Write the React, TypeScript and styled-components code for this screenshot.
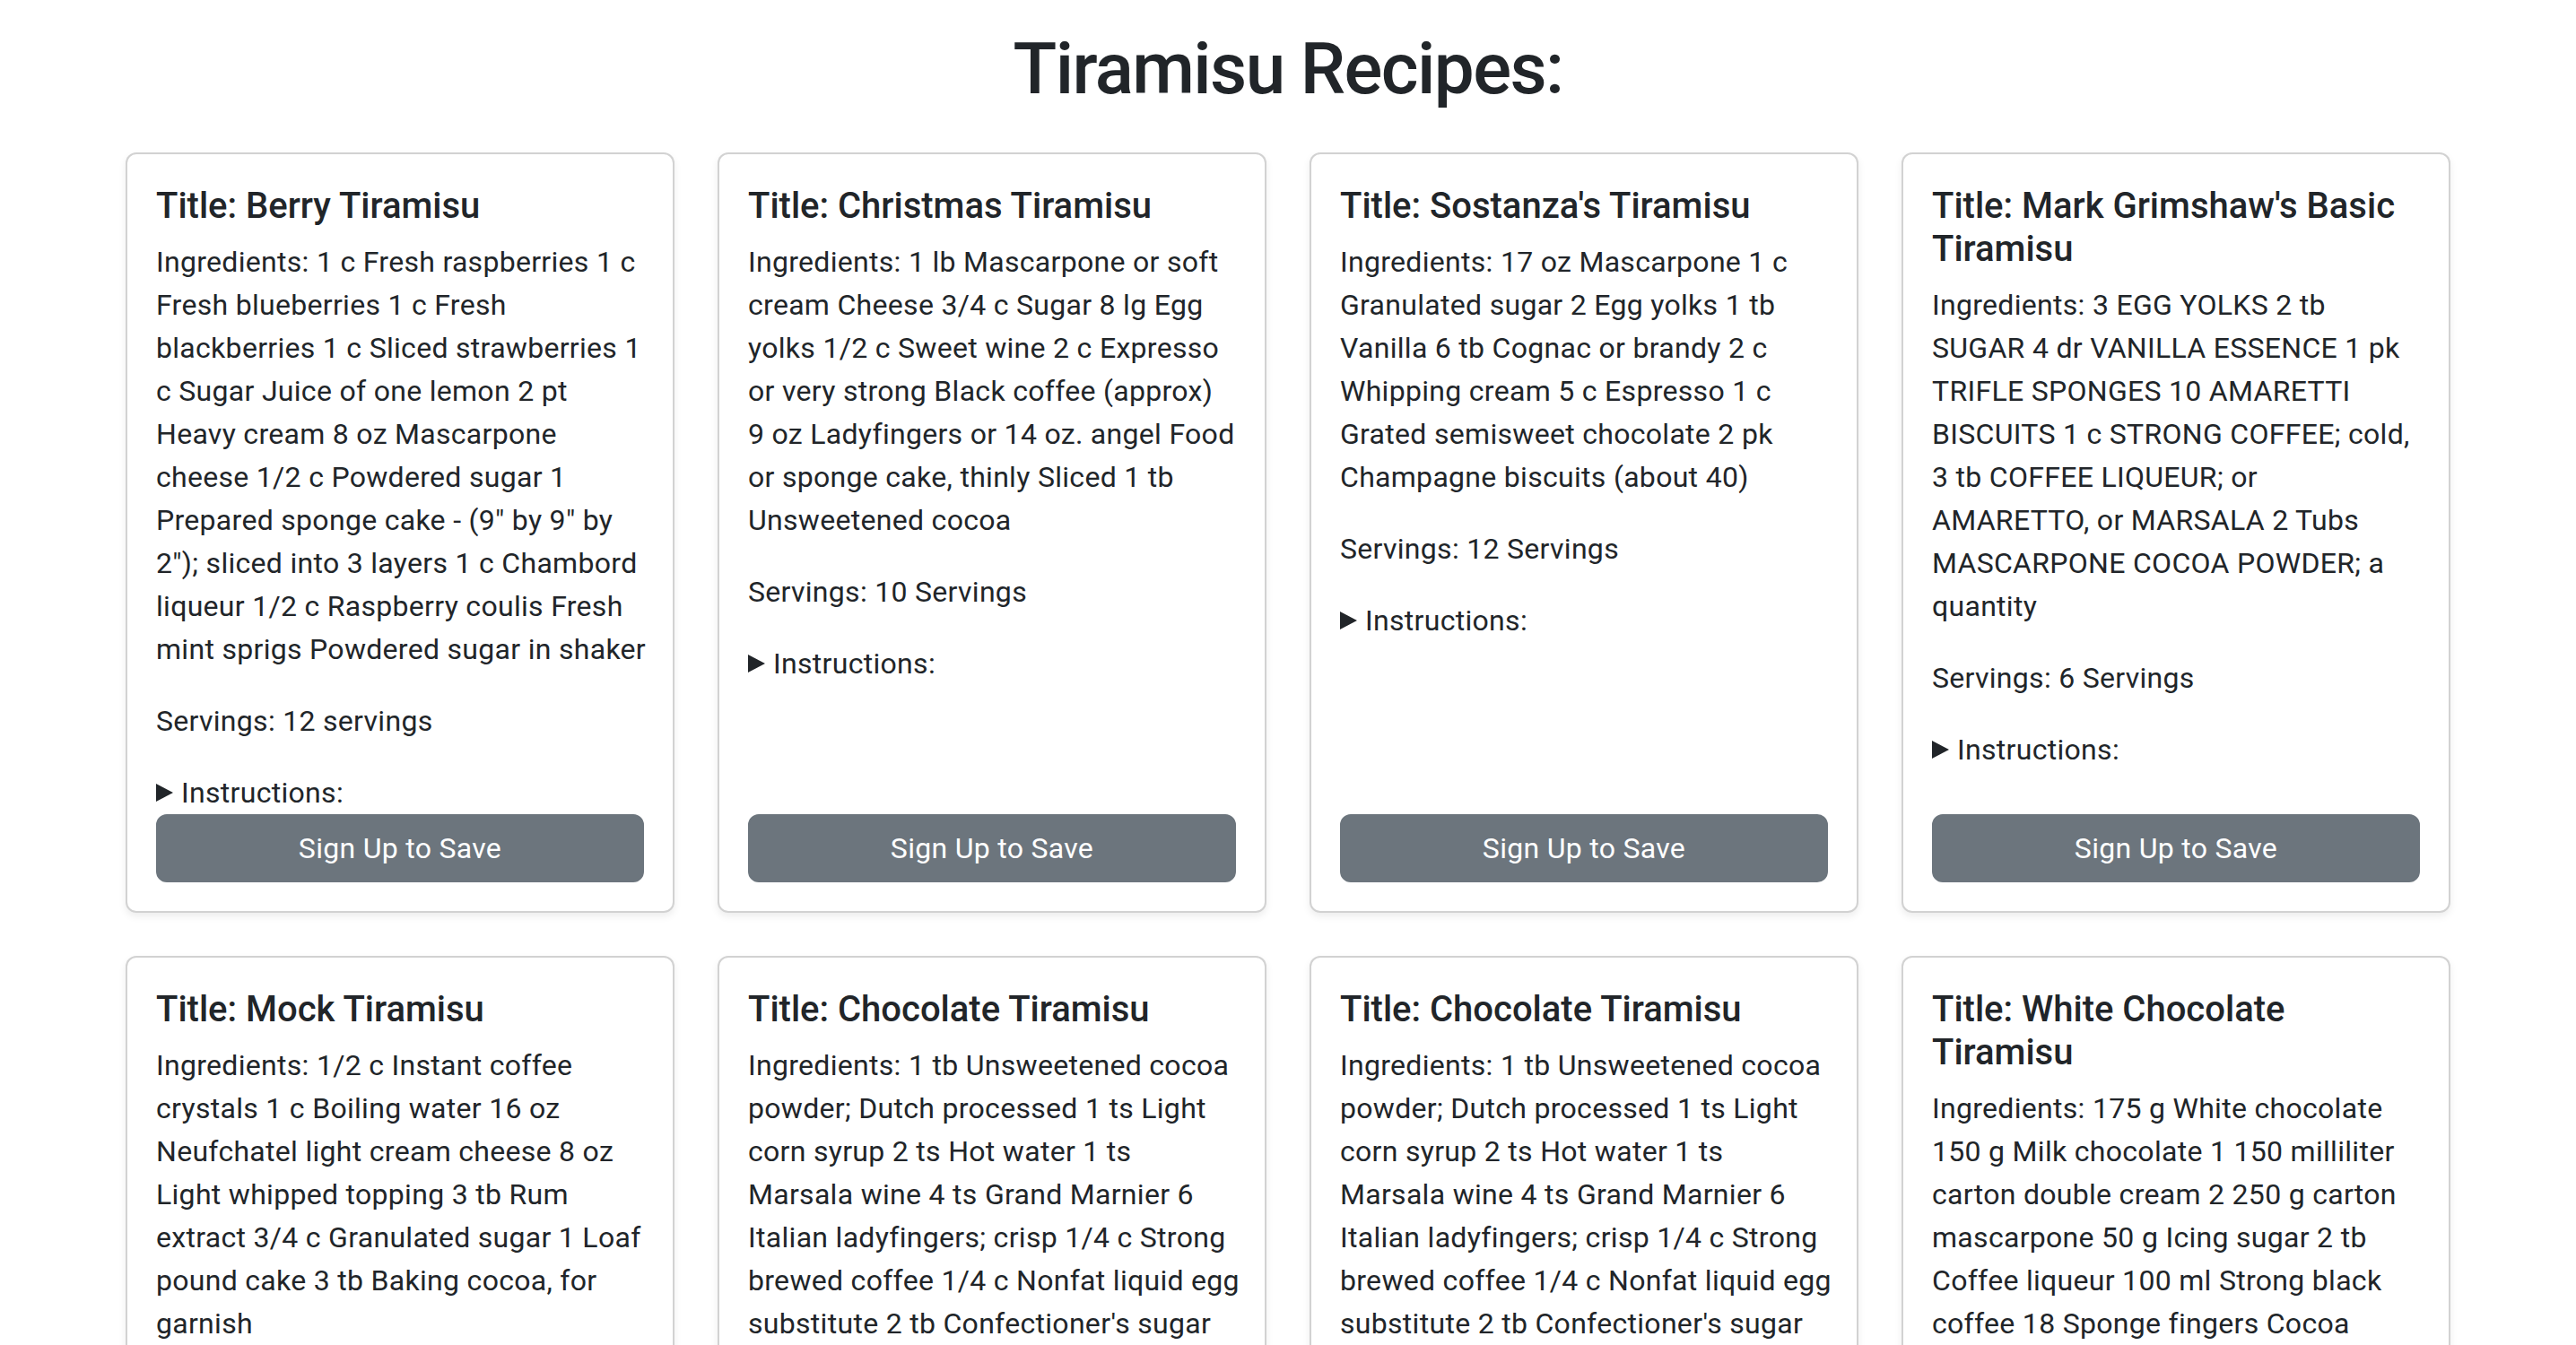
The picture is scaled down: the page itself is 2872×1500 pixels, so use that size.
import React from "react";
import styled, { createGlobalStyle } from "styled-components";

const GlobalStyle = createGlobalStyle`
  *, *::before, *::after { box-sizing: border-box; }
  body {
    margin: 0;
    background: #ffffff;
    color: #212529;
    font-family: Roboto, "Liberation Sans", Arial, sans-serif;
    font-size: 32px;
    line-height: 48px;
    letter-spacing: 0.3px;
  }
`;

type Recipe = {
  title: string;
  ingredients: string[];
  servings: string;
};

const recipes: Recipe[] = [
  {
    title: "Berry Tiramisu",
    ingredients: [
      "Ingredients: 1 c Fresh raspberries 1 c",
      "Fresh blueberries 1 c Fresh",
      "blackberries 1 c Sliced strawberries 1",
      "c Sugar Juice of one lemon 2 pt",
      "Heavy cream 8 oz Mascarpone",
      "cheese 1/2 c Powdered sugar 1",
      "Prepared sponge cake - (9\" by 9\" by",
      "2\"); sliced into 3 layers 1 c Chambord",
      "liqueur 1/2 c Raspberry coulis Fresh",
      "mint sprigs Powdered sugar in shaker",
    ],
    servings: "12 servings",
  },
  {
    title: "Christmas Tiramisu",
    ingredients: [
      "Ingredients: 1 lb Mascarpone or soft",
      "cream Cheese 3/4 c Sugar 8 lg Egg",
      "yolks 1/2 c Sweet wine 2 c Expresso",
      "or very strong Black coffee (approx)",
      "9 oz Ladyfingers or 14 oz. angel Food",
      "or sponge cake, thinly Sliced 1 tb",
      "Unsweetened cocoa",
    ],
    servings: "10 Servings",
  },
  {
    title: "Sostanza's Tiramisu",
    ingredients: [
      "Ingredients: 17 oz Mascarpone 1 c",
      "Granulated sugar 2 Egg yolks 1 tb",
      "Vanilla 6 tb Cognac or brandy 2 c",
      "Whipping cream 5 c Espresso 1 c",
      "Grated semisweet chocolate 2 pk",
      "Champagne biscuits (about 40)",
    ],
    servings: "12 Servings",
  },
  {
    title: "Mark Grimshaw's Basic Tiramisu",
    ingredients: [
      "Ingredients: 3 EGG YOLKS 2 tb",
      "SUGAR 4 dr VANILLA ESSENCE 1 pk",
      "TRIFLE SPONGES 10 AMARETTI",
      "BISCUITS 1 c STRONG COFFEE; cold,",
      "3 tb COFFEE LIQUEUR; or",
      "AMARETTO, or MARSALA 2 Tubs",
      "MASCARPONE COCOA POWDER; a",
      "quantity",
    ],
    servings: "6 Servings",
  },
  {
    title: "Mock Tiramisu",
    ingredients: [
      "Ingredients: 1/2 c Instant coffee",
      "crystals 1 c Boiling water 16 oz",
      "Neufchatel light cream cheese 8 oz",
      "Light whipped topping 3 tb Rum",
      "extract 3/4 c Granulated sugar 1 Loaf",
      "pound cake 3 tb Baking cocoa, for",
      "garnish",
    ],
    servings: "12 Servings",
  },
  {
    title: "Chocolate Tiramisu",
    ingredients: [
      "Ingredients: 1 tb Unsweetened cocoa",
      "powder; Dutch processed 1 ts Light",
      "corn syrup 2 ts Hot water 1 ts",
      "Marsala wine 4 ts Grand Marnier 6",
      "Italian ladyfingers; crisp 1/4 c Strong",
      "brewed coffee 1/4 c Nonfat liquid egg",
      "substitute 2 tb Confectioner's sugar",
      "8 oz Light cream cheese; softened",
      "1/4 c Skim ricotta cheese",
    ],
    servings: "8 Servings",
  },
  {
    title: "Chocolate Tiramisu",
    ingredients: [
      "Ingredients: 1 tb Unsweetened cocoa",
      "powder; Dutch processed 1 ts Light",
      "corn syrup 2 ts Hot water 1 ts",
      "Marsala wine 4 ts Grand Marnier 6",
      "Italian ladyfingers; crisp 1/4 c Strong",
      "brewed coffee 1/4 c Nonfat liquid egg",
      "substitute 2 tb Confectioner's sugar",
      "8 oz Light cream cheese; softened",
      "1/4 c Skim ricotta cheese",
    ],
    servings: "8 Servings",
  },
  {
    title: "White Chocolate Tiramisu",
    ingredients: [
      "Ingredients: 175 g White chocolate",
      "150 g Milk chocolate 1 150 milliliter",
      "carton double cream 2 250 g carton",
      "mascarpone 50 g Icing sugar 2 tb",
      "Coffee liqueur 100 ml Strong black",
      "coffee 18 Sponge fingers Cocoa",
      "powder; to dust",
    ],
    servings: "6 Servings",
  },
];

const Page = styled.main`
  padding: 29px 0 96px;
`;

const Heading = styled.h1`
  margin: 0 0 45px;
  text-align: center;
  font-size: 80px;
  line-height: 96px;
  font-weight: 500;
  letter-spacing: -1.6px;
`;

const Grid = styled.div`
  width: 2592px;
  margin: 0 auto;
  display: grid;
  grid-template-columns: repeat(4, 612px);
  column-gap: 48px;
  row-gap: 48px;
`;

const Card = styled.article`
  display: flex;
  flex-direction: column;
  background: #ffffff;
  border: 2px solid rgba(0, 0, 0, 0.175);
  border-radius: 12px;
  box-shadow: 0 4px 8px rgba(0, 0, 0, 0.075);
`;

const CardBody = styled.div`
  flex: 1 1 auto;
  display: flex;
  flex-direction: column;
  padding: 32px;
`;

const CardTitle = styled.h5`
  margin: 2px 0 14px;
  font-size: 40px;
  line-height: 48px;
  font-weight: 500;
  letter-spacing: 0;
`;

const Text = styled.p`
  margin: 0 0 32px;
`;

const Line = styled.span`
  display: block;
  white-space: nowrap;
`;

const Details = styled.details`
  margin: 0;
`;

const Summary = styled.summary`
  cursor: pointer;
  display: block;
  list-style: none;

  &::-webkit-details-marker {
    display: none;
  }

  &::before {
    content: "";
    display: inline-block;
    width: 0;
    height: 0;
    margin-right: 9px;
    border-left: 19px solid currentColor;
    border-top: 10.5px solid transparent;
    border-bottom: 10.5px solid transparent;
    vertical-align: 1px;
  }
`;

const SaveButton = styled.button`
  margin-top: auto;
  width: 100%;
  height: 76px;
  padding: 12px 24px;
  font-family: inherit;
  font-size: 32px;
  line-height: 48px;
  letter-spacing: 0.3px;
  color: #ffffff;
  background: #6c757d;
  border: 2px solid #6c757d;
  border-radius: 12px;
  cursor: pointer;
  text-align: center;
`;

function RecipeCard({ recipe }: { recipe: Recipe }) {
  return (
    <Card>
      <CardBody>
        <CardTitle>Title: {recipe.title}</CardTitle>
        <Text>
          {recipe.ingredients.map((line, i) => (
            <Line key={i}>{line}</Line>
          ))}
        </Text>
        <Text>Servings: {recipe.servings}</Text>
        <Details>
          <Summary>Instructions:</Summary>
        </Details>
        <SaveButton type="button">Sign Up to Save</SaveButton>
      </CardBody>
    </Card>
  );
}

export default function App() {
  return (
    <>
      <GlobalStyle />
      <Page>
        <Heading>Tiramisu Recipes:</Heading>
        <Grid>
          {recipes.map((r, i) => (
            <RecipeCard key={i} recipe={r} />
          ))}
        </Grid>
      </Page>
    </>
  );
}
